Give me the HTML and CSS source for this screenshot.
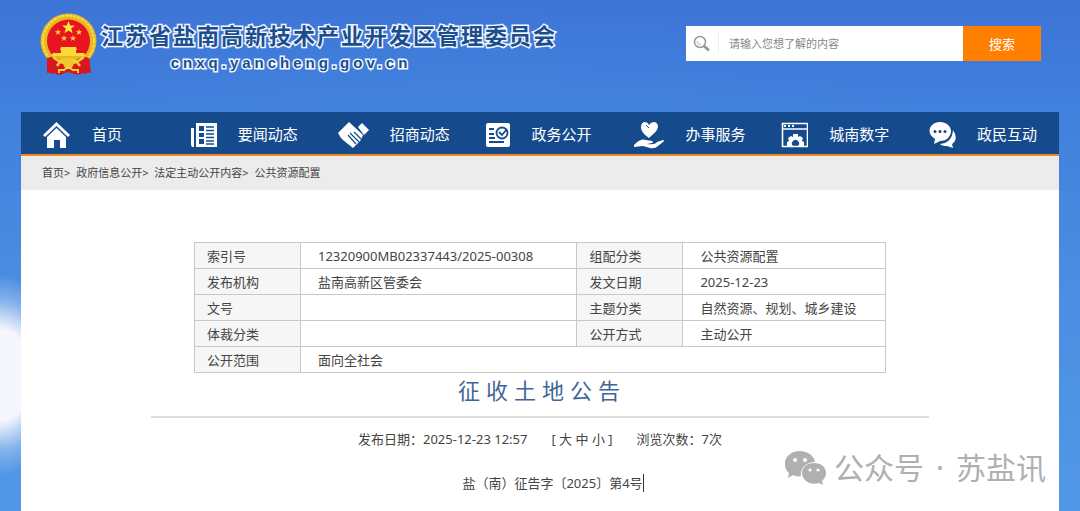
FILE: index.html
```html
<!DOCTYPE html>
<html lang="zh-CN">
<head>
<meta charset="utf-8">
<meta name="viewport" content="width=device-width, initial-scale=1">
<title>征收土地公告</title>
<link rel="stylesheet" href="styles.css">
</head>
<body>
<div class="page">
  <header class="header">
    <div class="brand">
      <svg class="emblem" viewBox="0 0 57 63" aria-hidden="true">
        <path d="M8 43 7 59l6 2 3-2 4 3 8-3 9 3 4-3 3 2 6-2-1-16z" fill="#d9161c"/>
        <ellipse cx="28.500" cy="28" rx="28" ry="27.500" fill="#e9b722"/>
        <ellipse cx="28.500" cy="28" rx="25.500" ry="25.500" fill="none" stroke="#f8dc4c" stroke-width="2" stroke-dasharray="3 1"/>
        <circle cx="28.500" cy="28" r="21.500" fill="#e8141f"/>
        <path d="m28.500 8 1.700 4.500h4.800l-3.800 3 1.400 4.700-4.100-2.800-4.100 2.800 1.400-4.700-3.800-3h4.800z" fill="#fce83a"/>
        <g fill="#fbd936">
          <path id="star" d="m18 16 .8 2.200h2.400l-1.900 1.500.7 2.300-2-1.400-2 1.400.7-2.300-1.900-1.500h2.400z"/>
          <use href="#star" x="21"/><use href="#star" x="6" y="6"/><use href="#star" x="15" y="6"/>
          <path d="M21 34h15l1 3h-1v3h8l2 3H11l2-3h8v-3h-1z"/>
        </g>
        <path d="M10 43h37l-4 8H14z" fill="#e9b722"/>
        <path d="M7 45c8-4 12 4 21 4s13-8 21-4l2 15-7-2-4 4-5-5H22l-5 5-4-4-6 2z" fill="#d9161c"/>
        <path d="M13 44q15 13 31 0M17 53q5-8 11-6 6-2 12 6" fill="none" stroke="#f5cf3b" stroke-width="2.500"/>
        <circle cx="28.500" cy="51" r="5" fill="#f1c52f"/>
        <path d="M19 60v-3h5l4-3 5 3h5v3" fill="none" stroke="#f5cf3b" stroke-width="2"/>
      </svg>
      <div class="brand-text">
        <h1 class="site-name">江苏省盐南高新技术产业开发区管理委员会</h1>
        <p class="site-domain">cnxq.yancheng.gov.cn</p>
      </div>
    </div>
    <form class="search">
      <label class="search-label" for="keyword" aria-label="搜索关键词">
        <svg width="18" height="18" viewBox="0 0 18 18" fill="none" stroke="#999">
          <circle cx="7" cy="7" r="5.500" stroke-width="1.500"/>
          <path d="M4 6q0 4 4 4" stroke="#bbb"/>
          <path d="m11 11 5 4.500" stroke-width="3"/>
        </svg>
      </label>
      <input class="search-input" id="keyword" type="text" placeholder="请输入您想了解的内容">
      <button class="search-button" type="button">搜索</button>
    </form>
  </header>

  <nav class="nav">
    <a class="nav-item" href="#"><svg width="29" height="28" viewBox="0 0 29 28" fill="#fff"><path d="M14.500 1 1 14l2 2L14.500 5 26 16l2-2z"/><path d="m14.500 7 9.500 9v11h-6v-8h-6v8H5V16z"/></svg><span>首页</span></a>
    <a class="nav-item" href="#"><svg width="27" height="28" viewBox="0 0 27 28"><path d="M6 2h21v24H6zM1 7h3v19H3q-2 0-2-3z" fill="#fff"/><path d="M9 5h5v5H9zM9 12h5v4H9zM9 18h5v5H9z" fill="#154a8d"/><path d="M16 6h8M16 9.500h8M16 13h8M16 16.500h8M16 20h8M16 23h8" stroke="#154a8d" stroke-width="1.300"/></svg><span>要闻动态</span></a>
    <a class="nav-item" href="#"><svg width="31" height="28" viewBox="0 0 31 28"><path d="M11 1 0 12l3 5 2 2 10 8 8-8 2-5z" fill="#fff"/><path d="m10 14 8 9M12 12l9 9M16 11l8 8" stroke="#154a8d" stroke-width="1.200"/><path d="m20 6 4-4 7 7-5 5z" fill="#fff"/></svg><span>招商动态</span></a>
    <a class="nav-item" href="#"><svg width="25" height="28" viewBox="0 0 25 28"><rect x="0" y="2" width="24" height="24" rx="2" fill="#fff"/><g fill="none" stroke="#154a8d" stroke-width="1.800"><path d="M3 8h5M3 13h5M3 17h6M3 21h15"/><circle cx="16" cy="12" r="5.500"/><path d="m13 11 3 3 5-6"/></g></svg><span>政务公开</span></a>
    <a class="nav-item" href="#"><svg width="31" height="28" viewBox="0 0 31 28" fill="#fff"><path d="M16 17Q7 11 8 5c1-5 6-5 8-1 3-4 8-4 9 1 0 5-5 8-9 12z"/><path d="m13 4 3 3" stroke="#154a8d" fill="none"/><path d="M1 24q7-7 12-5l6 1q2 1 0 2l-5 1q8 1 10-2l6-2q2 0 0 2l-5 4q-3 3-8 2l-7-2-9 1z"/></svg><span>办事服务</span></a>
    <a class="nav-item" href="#"><svg width="27" height="28" viewBox="0 0 27 28"><path d="M1.500 2.500h25v23h-25zM1 8h26" fill="none" stroke="#fff" stroke-width="1.600"/><path d="M3 5h2M7 5h2M11 5h2" stroke="#fff" stroke-width="2"/><path d="M6 25v-4l2-1-1-3 3-2 2 1v-3h5v3l2-1 3 2-1 3 2 1v4h-6a3.500 3.500 0 1 0-5 0z" fill="#fff"/></svg><span>城南数字</span></a>
    <a class="nav-item" href="#"><svg width="27" height="28" viewBox="0 0 27 28" fill="#fff"><path d="M24 9q6 9-1 14l1 4-6-2q-5 0-7-2 12-1 13-14z"/><path d="M11 1c6 0 11 4 11 9s-4 10-11 10l-6 3 1-5C-4 12 1 1 11 1z"/><g fill="#154a8d"><circle cx="6" cy="10.500" r="1.500"/><circle cx="11" cy="10.500" r="1.500"/><circle cx="16" cy="10.500" r="1.500"/></g></svg><span>政民互动</span></a>
  </nav>

  <div class="breadcrumb">
    <a href="#">首页</a>&gt; <a href="#">政府信息公开</a>&gt; <a href="#">法定主动公开内容</a>&gt; <a href="#">公共资源配置</a>
  </div>

  <main class="article">
    <table class="info">
      <colgroup><col class="col-key"><col class="col-wide"><col class="col-key"><col></colgroup>
      <tbody>
        <tr><th scope="row">索引号</th><td>12320900MB02337443/2025-00308</td><th scope="row">组配分类</th><td>公共资源配置</td></tr>
        <tr><th scope="row">发布机构</th><td>盐南高新区管委会</td><th scope="row">发文日期</th><td>2025-12-23</td></tr>
        <tr><th scope="row">文号</th><td></td><th scope="row">主题分类</th><td>自然资源、规划、城乡建设</td></tr>
        <tr><th scope="row">体裁分类</th><td></td><th scope="row">公开方式</th><td>主动公开</td></tr>
        <tr><th scope="row">公开范围</th><td colspan="3">面向全社会</td></tr>
      </tbody>
    </table>
    <h2 class="title">征收土地公告</h2>
    <div class="meta">
      <span>发布日期：2025-12-23 12:57</span>
      <span>[ <a href="#">大</a> <a href="#">中</a> <a href="#">小</a> ]</span>
      <span>浏览次数：7次</span>
    </div>
    <p class="doc-number"><span class="caret">盐（南）征告字〔2025〕第4号</span></p>
  </main>

  <div class="watermark">
    <svg width="41" height="34" viewBox="0 0 41 34" fill="#b0b0b0">
      <path d="M15 0c8 0 14 5 15 11-9 0-15 6-14 14-3 1-6 0-8-1l-5 3 1-5C-5 14 1 0 15 0z"/>
      <path d="M29 12c7 0 12 4 12 10 0 4-2 6-4 8l1 4-4-2c-9 3-17-3-17-10 0-6 5-10 12-10z"/>
      <g fill="#fff"><circle cx="10" cy="9" r="2"/><circle cx="20" cy="9" r="2"/><circle cx="25" cy="19" r="1.600"/><circle cx="33" cy="19" r="1.600"/></g>
    </svg>
    <span>公众号<span class="dot">·</span>苏盐讯</span>
  </div>
</div>
</body>
</html>
```
FILE: styles.css
```css
* {
  box-sizing: border-box;
}

body {
  margin: 0;
  min-height: 100vh;
  font: 13px/20px "Noto Sans", "Noto Sans CJK SC", sans-serif;
  color: #444;
  background:
    radial-gradient(ellipse 70px 100px at 0 375px, #f6f7fd 45%, rgba(170, 200, 242, 0.6) 75%, transparent) no-repeat,
    radial-gradient(ellipse 420px 110px at 45% 110px, rgba(68, 134, 222, 0.4), transparent) no-repeat,
    linear-gradient(#3d74d7, #4180dc 110px, #4b8ee2 300px, #5398e6 511px);
}

a {
  color: inherit;
  text-decoration: none;
}

.page {
  position: relative;
  display: flex;
  flex-direction: column;
  min-height: 100vh;
  padding: 0 21px;
}

.header {
  display: flex;
  justify-content: space-between;
  align-items: flex-start;
  height: 112px;
  padding: 13px 18px 0 19px;
}

.brand {
  display: flex;
  gap: 4px;
}

.emblem {
  width: 57px;
  height: 63px;
}

.brand-text {
  padding-top: 5px;
  text-align: center;
  color: #1c4e8c;
  -webkit-text-stroke: 3px #f0f6ff;
  paint-order: stroke fill;
}

.site-name {
  margin: 0;
  font: bold 22px/32px "Noto Sans CJK SC", sans-serif;
  letter-spacing: 2px;
}

.site-domain {
  margin: 0;
  padding-right: 76px;
  font: bold 15px/26px "Liberation Sans", sans-serif;
  letter-spacing: 4px;
}

.search {
  display: flex;
  width: 355px;
  height: 35px;
  margin-top: 13px;
  background: #fff;
}

.search-label {
  display: flex;
  align-items: center;
  width: 33px;
  margin: 7px 0;
  padding-left: 7px;
  border-right: 1px solid #eee;
}

.search-input {
  flex: 1;
  min-width: 0;
  padding: 0 10px;
  border: 0;
  background: none;
  font: inherit;
  font-size: 11px;
}

.search-input::placeholder {
  color: #888;
}

.search-button {
  width: 78px;
  border: 0;
  background: #ff7f00;
  color: #fff;
  font: inherit;
}

.nav {
  display: flex;
  height: 44px;
  padding-left: 21px;
  border-bottom: 2px solid #f5851f;
  background: #154a8d;
}

.nav-item {
  display: flex;
  flex: 0 0 calc((100% + 18px) / 7);
  align-items: center;
  gap: 21px;
  padding-top: 4px;
  color: #fff;
  font-size: 15px;
  white-space: nowrap;
}

.nav-item span {
  padding-bottom: 2px;
}

.breadcrumb {
  height: 34px;
  padding: 0 21px;
  background: #ececec;
  font-size: 11px;
  line-height: 34px;
}

.breadcrumb a + a {
  margin-left: 3px;
}

.article {
  flex: 1;
  padding: 52px 130px 16px;
  background: #fff;
}

.info {
  width: calc(100% - 86px);
  margin: 0 43px;
  border-collapse: collapse;
  table-layout: fixed;
}

.col-key {
  width: 106px;
}

.col-wide {
  width: 40%;
}

.info th,
.info td {
  height: 26px;
  padding: 2px 17px;
  border: 1px solid #c8c8c8;
  line-height: 20px;
  font-weight: normal;
  text-align: left;
}

.info th {
  padding: 2px 12px;
  background: #f6f6f6;
}

.title {
  margin: 0;
  padding-bottom: 9px;
  border-bottom: 2px solid #ddd;
  color: #3e6699;
  font-size: 22px;
  font-weight: normal;
  line-height: 34px;
  letter-spacing: 6px;
  text-indent: 4px;
  text-align: center;
}

.meta {
  display: flex;
  justify-content: center;
  gap: 24px;
  padding-top: 11px;
}

.doc-number {
  margin: 24px 0 0;
  padding-left: 26px;
  text-align: center;
}

.caret {
  border-right: 1px solid #333;
}

.watermark {
  position: absolute;
  right: 34px;
  bottom: 23px;
  display: flex;
  align-items: center;
  gap: 8px;
  color: #b0b0b0;
  font: 30px/40px "Noto Sans", "Noto Sans CJK SC", sans-serif;
}

.dot {
  margin: 0 12px;
}
```
